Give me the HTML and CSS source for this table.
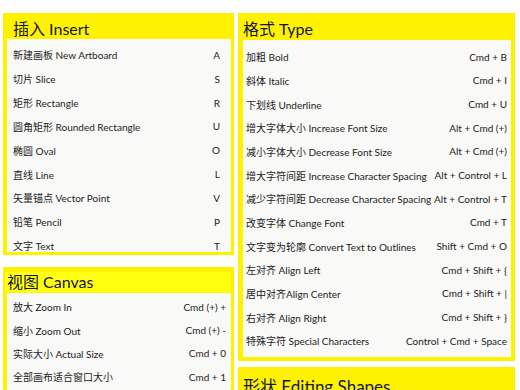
FILE: index.html
```html
<!DOCTYPE html>
<html lang="zh">
<head>
<meta charset="utf-8">
<title>Sketch 快捷键</title>
<link rel="stylesheet" href="styles.css">
</head>
<body>
<div class="page">
  <div class="col col-left">
    <section class="panel panel-insert">
      <h2 class="title">插入 Insert</h2>
      <ul class="list">
        <li class="row"><span class="name">新建画板 New Artboard</span><span class="key">A</span></li>
        <li class="row"><span class="name">切片 Slice</span><span class="key">S</span></li>
        <li class="row"><span class="name">矩形 Rectangle</span><span class="key">R</span></li>
        <li class="row"><span class="name">圆角矩形 Rounded Rectangle</span><span class="key">U</span></li>
        <li class="row"><span class="name">椭圆 Oval</span><span class="key">O</span></li>
        <li class="row"><span class="name">直线 Line</span><span class="key">L</span></li>
        <li class="row"><span class="name">矢量锚点 Vector Point</span><span class="key">V</span></li>
        <li class="row"><span class="name">铅笔 Pencil</span><span class="key">P</span></li>
        <li class="row"><span class="name">文字 Text</span><span class="key">T</span></li>
      </ul>
    </section>
    <section class="panel panel-canvas">
      <h2 class="title"><span class="title-inner">视图 Canvas</span></h2>
      <ul class="list">
        <li class="row"><span class="name">放大 Zoom In</span><span class="key">Cmd (+) +</span></li>
        <li class="row"><span class="name">缩小 Zoom Out</span><span class="key">Cmd (+) -</span></li>
        <li class="row"><span class="name">实际大小 Actual Size</span><span class="key">Cmd + 0</span></li>
        <li class="row"><span class="name">全部画布适合窗口大小</span><span class="key">Cmd + 1</span></li>
        <li class="row"><span class="name">选中图层适合窗口大小</span><span class="key">Cmd + 2</span></li>
      </ul>
    </section>
  </div>
  <div class="col col-right">
    <section class="panel panel-type">
      <h2 class="title">格式 Type</h2>
      <ul class="list">
        <li class="row"><span class="name">加粗 Bold</span><span class="key">Cmd + B</span></li>
        <li class="row"><span class="name">斜体 Italic</span><span class="key">Cmd + I</span></li>
        <li class="row"><span class="name">下划线 Underline</span><span class="key">Cmd + U</span></li>
        <li class="row"><span class="name">增大字体大小 Increase Font Size</span><span class="key">Alt + Cmd (+)</span></li>
        <li class="row"><span class="name">减小字体大小 Decrease Font Size</span><span class="key">Alt + Cmd (+)</span></li>
        <li class="row"><span class="name">增大字符间距 Increase Character Spacing</span><span class="key">Alt + Control + L</span></li>
        <li class="row"><span class="name">减少字符间距 Decrease Character Spacing</span><span class="key">Alt + Control + T</span></li>
        <li class="row"><span class="name">改变字体 Change Font</span><span class="key">Cmd + T</span></li>
        <li class="row"><span class="name">文字变为轮廓 Convert Text to Outlines</span><span class="key">Shift + Cmd + O</span></li>
        <li class="row"><span class="name">左对齐 Align Left</span><span class="key">Cmd + Shift + {</span></li>
        <li class="row"><span class="name">居中对齐Align Center</span><span class="key">Cmd + Shift + |</span></li>
        <li class="row"><span class="name">右对齐 Align Right</span><span class="key">Cmd + Shift + }</span></li>
        <li class="row"><span class="name">特殊字符 Special Characters</span><span class="key">Control + Cmd + Space</span></li>
      </ul>
    </section>
    <section class="panel panel-shapes">
      <h2 class="title">形状 Editing Shapes</h2>
    </section>
  </div>
</div>
</body>
</html>
```
FILE: styles.css
```css
*, *::before, *::after {
  box-sizing: border-box;
}

html, body {
  margin: 0;
  padding: 0;
  background: #ffffff;
}

body {
  font-family: Lato, "Noto Sans CJK SC", sans-serif;
  color: #222222;
  overflow: hidden;
  height: 390px;
}

.page {
  display: grid;
  grid-template-columns: 231px 277px;
  column-gap: 4px;
  padding: 13px 0 0 3px;
  height: 390px;
  overflow: hidden;
  align-items: start;
}

.col {
  display: flex;
  flex-direction: column;
}

.col-left { gap: 12px; }
.col-right { gap: 6px; }

.panel {
  background: #fff200;
  padding: 0 3px 3px 4px;
}

.title {
  margin: 0;
  height: 26px;
  padding-top: 6px;
  font-size: 16px;
  line-height: 20px;
  font-weight: 400;
  color: #15153a;
  white-space: nowrap;
}

.list {
  list-style: none;
  margin: 0;
  padding: 0;
  background: #f9f9f7;
  overflow: hidden;
}

.row {
  display: flex;
  justify-content: space-between;
  align-items: center;
  font-size: 10px;
  white-space: nowrap;
}

.key {
  text-align: right;
}

/* Insert */
.panel-insert .title { padding-left: 6px; }
.panel-insert .list {
  height: 213px;
  padding: 4px 11px 0 6px;
}
.panel-insert .row { height: 23.85px; }

/* Canvas */
.panel-canvas .title {
  padding: 5px 0 0 0;
}
.panel-canvas .title-inner {
  display: block;
  background: #ffff10;
  margin: 0 0 0 -2px;
  padding-left: 2px;
}
.panel-canvas .list {
  height: 200px;
  padding: 2px 5px 0 6px;
}
.panel-canvas .row { height: 23.4px; }

/* Type */
.panel-type {
  padding: 0 4px 4px 5px;
}
.panel-type .title {
  height: 27px;
  padding-left: 0;
}
.panel-type .list {
  padding: 5px 4px 4px 3px;
}
.panel-type .row { height: 23.67px; }

/* Shapes */
.panel-shapes {
  height: 60px;
}
.panel-shapes .title {
  height: 36px;
  padding-top: 10px;
  padding-left: 1px;
  font-size: 17px;
}
```
